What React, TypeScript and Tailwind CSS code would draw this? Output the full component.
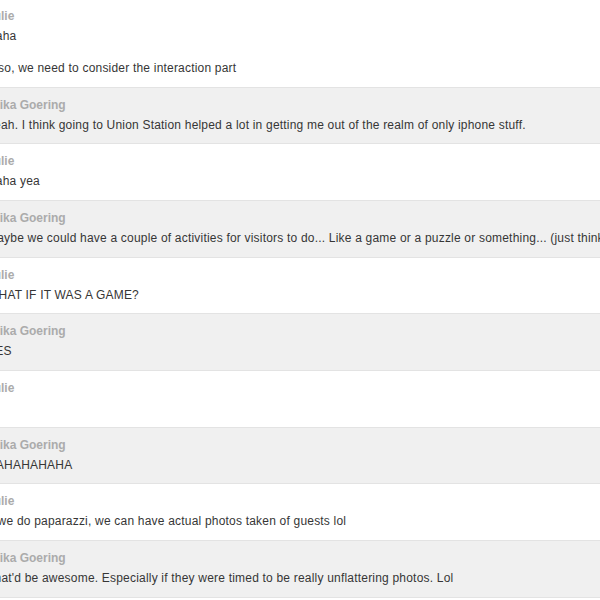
const rows = [
  { name: "Julie", messages: ["Haha", "Also, we need to consider the interaction part"] },
  {
    name: "Erika Goering",
    messages: [
      "Yeah. I think going to Union Station helped a lot in getting me out of the realm of only iphone stuff.",
    ],
  },
  { name: "Julie", messages: ["Haha yea"] },
  {
    name: "Erika Goering",
    messages: [
      "Maybe we could have a couple of activities for visitors to do... Like a game or a puzzle or something... (just thinking out loud)",
    ],
  },
  { name: "Julie", messages: ["WHAT IF IT WAS A GAME?"] },
  { name: "Erika Goering", messages: ["YES"] },
  { name: "Julie", messages: [""] },
  { name: "Erika Goering", messages: ["HAHAHAHAHA"] },
  {
    name: "Julie",
    messages: ["If we do paparazzi, we can have actual photos taken of guests lol"],
  },
  {
    name: "Erika Goering",
    messages: [
      "That'd be awesome. Especially if they were timed to be really unflattering photos. Lol",
    ],
  },
  { name: "Julie", messages: ["Yeah"] },
];

export default function App() {
  return (
    <div className="w-[600px] h-[600px] overflow-hidden bg-white font-['Liberation_Sans',Arial,sans-serif] text-[12px]">
      <div className="flex flex-col -mt-[2px]">
        {rows.map((row, i) => (
          <div
            key={i}
            className={`border-t border-[#e3e3e3] pt-[7px] pb-[8.67px] ${
              i % 2 === 1 ? "bg-[#f0f0f0]" : "bg-white"
            }`}
          >
            <div className="-ml-[13px] whitespace-nowrap">
              <div className="leading-[20px] font-bold text-[#ababab]">{row.name}</div>
              {row.messages.map((m, j) => (
                <div
                  key={j}
                  className={`leading-[20px] h-[20px] tracking-[0.2px] text-[#363636] ${
                    j > 0 ? "mt-[12px]" : ""
                  }`}
                >
                  {m}
                </div>
              ))}
            </div>
          </div>
        ))}
      </div>
    </div>
  );
}
